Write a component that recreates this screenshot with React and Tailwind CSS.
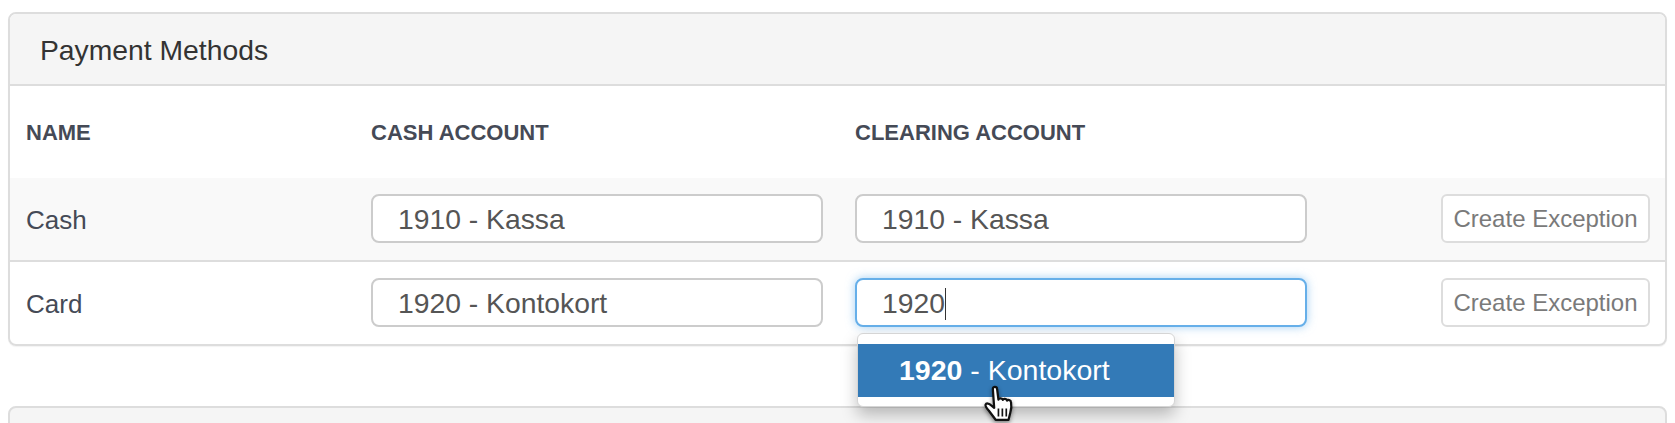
import React from 'react';

const rows = [
  { name: 'Cash', cash: '1910 - Kassa', clearing: '1910 - Kassa', striped: true },
  { name: 'Card', cash: '1920 - Kontokort', clearing: '1920', focused: true },
];

const HandCursor = () => (
  <svg className="absolute left-[125px] top-[51px] drop-shadow-[0_2px_2px_rgba(0,0,0,0.45)]" width="32" height="37" viewBox="0 0 27 33">
    <path
      d="M8 3.500c0-2.400 3.600-2.400 3.800 0l1.200 9.500c.3-1.600 3.600-1.600 3.900.3.4-1.400 3.400-1.200 3.800.6.6-1 3.300-.6 3.500 1.200.5 3 .4 6.500-.6 9.400l-1.600 6.500H10.500L4.500 23c-1.800-2-3.500-4-3-5.500.7-1.700 3-1 4.500.3l3.200 2.500z"
      fill="#fff"
      stroke="#111"
      strokeWidth="2"
      strokeLinejoin="round"
    />
    <path d="M13 21v7M16.500 21v7M20 21v7" stroke="#111" strokeWidth="1.500" fill="none" />
  </svg>
);

const Autocomplete = () => (
  <div className="absolute left-[2px] top-[55px] z-10 h-[74px] w-[318px] rounded-md border border-[#d5d5d5] bg-white pt-[10px] shadow-[0_8px_16px_rgba(0,0,0,0.25)]">
    <div className="h-[53px] bg-[#337ab7] pl-[41px] text-[28.500px] leading-[53px] text-white">
      <strong>1920</strong> - Kontokort
    </div>
    <HandCursor />
  </div>
);

const AccountInput = ({ value, focused }) => (
  <div className="relative h-[49px] w-[452px]">
    <div
      className={`flex h-full items-center rounded-lg border-2 bg-white pl-[25px] pt-[3px] text-[28.300px] text-[#555] ${
        focused
          ? 'border-[#66afe9] shadow-[0_0_10px_rgba(102,175,233,0.6)]'
          : 'border-[#ccc]'
      }`}
    >
      {value}
      {focused && <span className="h-[32px] w-[1.500px] bg-[#333]" />}
    </div>
    {focused && <Autocomplete />}
  </div>
);

const App = () => {
  return (
    <div className="h-[423px] overflow-hidden bg-white px-[8px] pt-[12px] font-['Liberation_Sans',Arial,sans-serif]">
      {/* Payment methods panel */}
      <div className="rounded-lg border-2 border-[#ddd] shadow-[0_1px_1px_rgba(0,0,0,0.05)]">
        <div className="flex h-[72px] items-center rounded-t-md border-b-2 border-[#ddd] bg-[#f5f5f5] pl-[30px] pt-[3px] text-[28.300px] text-[#333]">
          Payment Methods
        </div>
        <div className="grid h-[92px] grid-cols-[345px_484px_1fr] items-center pl-[16px] text-[22px] font-bold text-[#454a56]">
          <div>NAME</div>
          <div>CASH ACCOUNT</div>
          <div>CLEARING ACCOUNT</div>
        </div>
        {rows.map((row) => (
          <div
            key={row.name}
            className={`grid grid-cols-[345px_484px_1fr] items-center pb-[2px] pl-[16px] text-[26px] text-[#454a56] ${
              row.striped ? 'h-[84px] border-b-2 border-[#ddd] bg-[#f9f9f9]' : 'h-[82px]'
            }`}
          >
            <div className="pt-[4px]">{row.name}</div>
            <AccountInput value={row.cash} />
            <div className="flex items-center justify-between pr-[15px]">
              <AccountInput value={row.clearing} focused={row.focused} />
              <button className="h-[49px] w-[209px] rounded-md border-2 border-[#ddd] bg-white pt-[2px] text-center text-[24px] text-[#7a7a7a]">
                Create Exception
              </button>
            </div>
          </div>
        ))}
      </div>

      {/* Next panel, cut off by the window */}
      <div className="mt-[60px] h-[40px] rounded-t-lg border-2 border-[#ddd] bg-[#f5f5f5]" />
    </div>
  );
};

export default App;
